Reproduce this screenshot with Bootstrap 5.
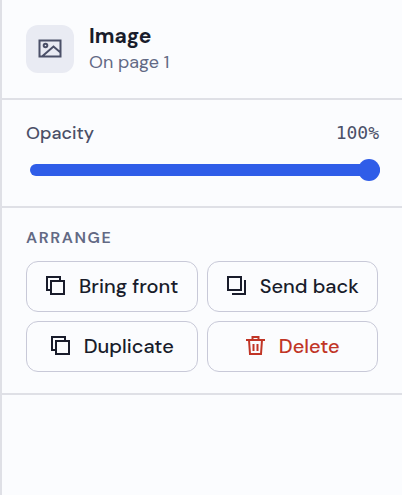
<!DOCTYPE html>
<html lang="en">
<head>
<meta charset="utf-8">
<meta name="viewport" content="width=device-width, initial-scale=1">
<title>Image properties</title>
<link href="https://cdn.jsdelivr.net/npm/bootstrap@5.3.0/dist/css/bootstrap.min.css" rel="stylesheet">
<style>
  :root { --ink: #191c2b; --muted: #626984; --soft: #4b5068; --line: #dfe0e6; --accent: #2f5de8; }
  body { background: #fbfcfe; color: var(--ink); font-family: "DM Sans", Inter, sans-serif; }
  .inspector { border-left: 2px solid var(--line); }
  .panel { border-bottom: 2px solid var(--line); }
  .panel-head { padding: 23px 24px; }
  .panel-opacity { padding: 20px 22px 25px 24px; }
  .panel-arrange { padding: 19px 24px 21px; }
  .kind { width: 48px; height: 48px; border-radius: 12px; background: #e9ebf3; color: var(--soft); }
  .head-row { gap: 15px; }
  .kind-name { font-size: 21px; line-height: 26px; font-weight: 700; }
  .kind-place { font-size: 18px; line-height: 26px; color: var(--muted); }
  .field-name { font-size: 18px; line-height: 26px; font-weight: 500; color: var(--soft); }
  .field-value { font-family: "DejaVu Sans Mono", monospace; font-size: 18px; line-height: 26px; color: var(--soft); margin-right: 1px; }
  .section-name { font-size: 16px; line-height: 22px; font-weight: 600; letter-spacing: 0.1em; color: var(--muted); }
  .slider { appearance: none; height: 22px; margin: 13px 0 0 4px; background: transparent; }
  .slider::-webkit-slider-runnable-track { height: 12px; border-radius: 6px; background: var(--accent); }
  .slider::-webkit-slider-thumb { appearance: none; width: 22px; height: 22px; margin-top: -5px; border-radius: 50%; background: var(--accent); }
  .actions { gap: 9px; grid-template-columns: 1fr 1fr; margin-top: 12px; }
  .action { height: 51px; border: 1px solid #c8c9d8; border-radius: 12px; padding: 0 0 2px; gap: 13px; font-size: 20px; line-height: 26px; font-weight: 500; color: var(--ink); white-space: nowrap; }
  .action-danger { color: #c13526; }
  svg { fill: none; stroke: currentColor; stroke-width: 2; flex: none; }
</style>
</head>
<body>
<main class="inspector min-vh-100">
  <header class="panel panel-head head-row d-flex align-items-center">
    <div class="kind d-flex align-items-center justify-content-center">
      <svg width="24" height="24" viewBox="0 0 24 24" aria-hidden="true"><path d="M1.500 3.500h21v16h-21zM4 19.500 15.500 9.500l7 6"/><circle cx="7.500" cy="8.500" r="1.800"/></svg>
    </div>
    <div class="flex-grow-1">
      <h1 class="kind-name m-0">Image</h1>
      <p class="kind-place m-0">On page 1</p>
    </div>
  </header>
  <section class="panel panel-opacity">
    <div class="d-flex justify-content-between">
      <label class="field-name" for="opacity">Opacity</label>
      <output class="field-value p-0" for="opacity">100%</output>
    </div>
    <div class="d-flex"><input class="slider flex-grow-1" type="range" id="opacity" min="0" max="100" value="100"></div>
  </section>
  <section class="panel panel-arrange">
    <h2 class="section-name text-uppercase m-0">Arrange</h2>
    <div class="actions d-grid">
      <button type="button" class="btn action d-flex align-items-center justify-content-center">
        <svg width="21" height="21" viewBox="0 0 21 21" aria-hidden="true"><path d="M6 15H2V2h13v4M6 6h13v13H6z"/></svg>Bring front
      </button>
      <button type="button" class="btn action d-flex align-items-center justify-content-center">
        <svg width="21" height="21" viewBox="0 0 21 21" aria-hidden="true"><path d="M2 2h13v13H2zM19 5v14H6"/></svg>Send back
      </button>
      <button type="button" class="btn action d-flex align-items-center justify-content-center">
        <svg width="21" height="21" viewBox="0 0 21 21" aria-hidden="true"><path d="M6 15H2V2h13v4M6 6h13v13H6z"/></svg>Duplicate
      </button>
      <button type="button" class="btn action action-danger d-flex align-items-center justify-content-center">
        <svg width="21" height="21" viewBox="0 0 21 21" aria-hidden="true"><path d="M1 5h19M7.500 5V2h6v3M4 5l1 14h11l1-14M8.500 9v7M12.500 9v7"/></svg>Delete
      </button>
    </div>
  </section>
</main>
<script src="https://cdn.jsdelivr.net/npm/bootstrap@5.3.0/dist/js/bootstrap.bundle.min.js"></script>
</body>
</html>
